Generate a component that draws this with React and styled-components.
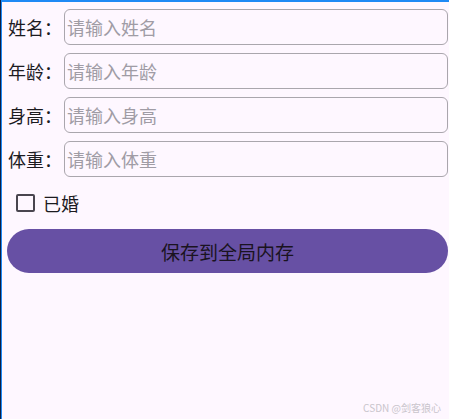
import styled, { createGlobalStyle } from "styled-components"

const GlobalStyle = createGlobalStyle`
    html, body {
        margin: 0;
        padding: 0;
        background: #FEF7FF;
    }
    * {
        box-sizing: border-box;
    }
`

const Frame = styled.div`
    position: relative;
    height: 419px;
    border-left: 1px solid #0d1f44;
    overflow: hidden;
`

const Screen = styled.div`
    height: 100%;
    border-top: 2px solid #1e8af5;
    border-left: 1px solid #1e8af5;
    padding: 7px 1px 0 5px;
    display: flex;
    flex-direction: column;
    gap: 8px;
    font-family: "Noto Sans CJK SC", "Noto Sans", sans-serif;
    color: #1c1b1f;
`

const Row = styled.div`
    display: flex;
    align-items: center;
    height: 36px;
    gap: 3px;
`

const Label = styled.span`
    font-size: 18px;
    width: 54px;
    padding-left: 1px;
    white-space: nowrap;
`

const Field = styled.input`
    flex: 1;
    height: 36px;
    border: 1px solid #aaa6ad;
    border-radius: 6px;
    background: transparent;
    font-family: inherit;
    font-size: 18px;
    padding: 0 2px;
    color: #1c1b1f;
    outline: none;

    &::placeholder {
        color: #a09ca5;
    }
`

const CheckRow = styled.label`
    display: flex;
    align-items: center;
    height: 44px;
    margin-top: -4px;
    padding-left: 9px;
    gap: 8px;
    font-size: 18px;
`

const Box = styled.span`
    width: 19px;
    height: 18px;
    border: 2px solid #49454f;
    border-radius: 2px;
`

const SaveButton = styled.button`
    height: 44px;
    margin-top: -4px;
    border: none;
    border-radius: 22px;
    background: #6750A4;
    font-family: inherit;
    font-size: 19px;
    color: #1a1320;
`

const Watermark = styled.span`
    position: absolute;
    right: 8px;
    bottom: 4px;
    font-family: "Noto Sans CJK SC", "Liberation Sans", sans-serif;
    font-size: 10px;
    color: #c9c5cc;
`

const campos = [
    { label: "姓名：", placeholder: "请输入姓名" },
    { label: "年龄：", placeholder: "请输入年龄" },
    { label: "身高：", placeholder: "请输入身高" },
    { label: "体重：", placeholder: "请输入体重" },
]

function App() {
    return (
        <Frame>
            <GlobalStyle />
            <Screen>
                {campos.map(campo => (
                    <Row key={campo.label}>
                        <Label>{campo.label}</Label>
                        <Field placeholder={campo.placeholder} />
                    </Row>
                ))}
                <CheckRow>
                    <Box />
                    已婚
                </CheckRow>
                <SaveButton>保存到全局内存</SaveButton>
            </Screen>
            <Watermark>CSDN @剑客狼心</Watermark>
        </Frame>
    )
}

export default App
